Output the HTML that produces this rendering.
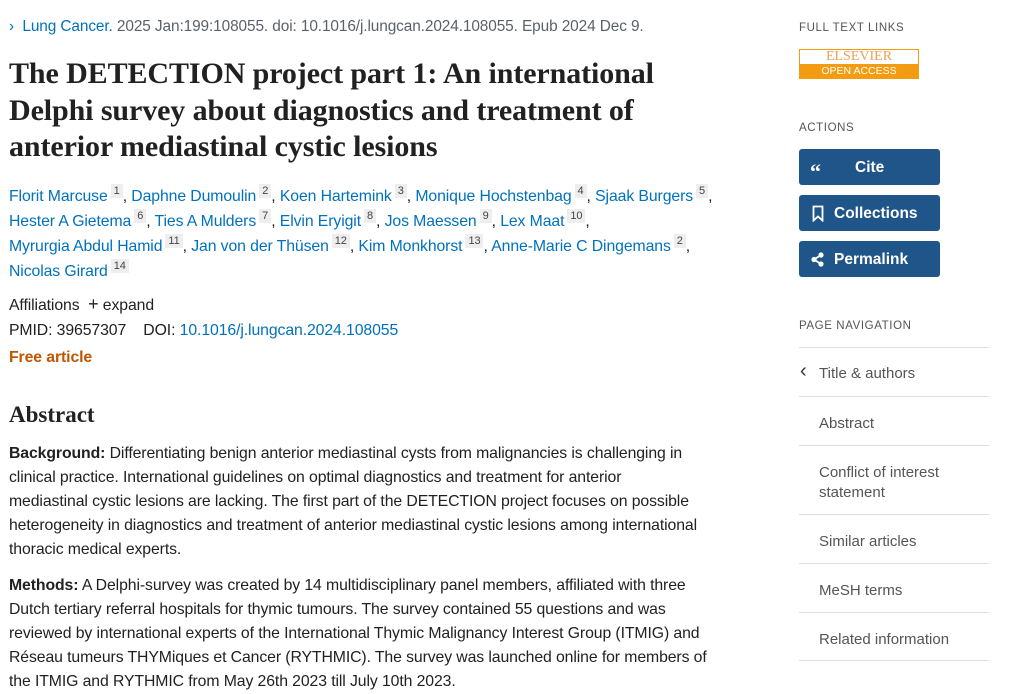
<!DOCTYPE html>
<html><head><meta charset="utf-8"><style>
*{margin:0;padding:0;box-sizing:border-box}
body{width:1027px;height:679px;overflow:hidden;background:#fff;font-family:"Liberation Sans",sans-serif;color:#212121;position:relative}
.a{position:absolute;white-space:nowrap}
a,.l{color:#0071bc;text-decoration:none}
.t{font-size:15.8px;line-height:24px;letter-spacing:-0.1px}
h1{position:absolute;left:9px;top:56px;font-family:"Liberation Serif",serif;font-weight:bold;font-size:30px;line-height:36.5px;color:#212121;white-space:nowrap;letter-spacing:-0.1px}
sup{display:inline-block;background:#eee;color:#444;font-size:11px;line-height:14px;padding:0 3px;vertical-align:7px;margin-left:3px}
.side{font-size:11.5px;letter-spacing:.6px;color:#555}
.btn{position:absolute;left:799px;width:141px;height:36px;background:#20558a;border-radius:3px;color:#fff;font-weight:bold;font-size:15.5px;line-height:38px}
.nav{position:absolute;left:799px;width:190px;border-top:1px solid #ddd;font-size:15px;color:#555;padding-left:20px;line-height:20px}
</style></head><body>
<div class="a t" style="left:9px;top:15px;color:#5b616b;font-size:15.4px"><span class="l">›&nbsp; Lung Cancer.</span> 2025 Jan:199:108055. doi: 10.1016/j.lungcan.2024.108055. Epub 2024 Dec 9.</div>
<h1>The DETECTION project part 1: An international<br>Delphi survey about diagnostics and treatment of<br>anterior mediastinal cystic lesions</h1>
<div class="a t" style="left:9px;top:184px;color:#212121">
<a>Florit Marcuse</a><sup>1</sup>, <a>Daphne Dumoulin</a><sup>2</sup>, <a>Koen Hartemink</a><sup>3</sup>, <a>Monique Hochstenbag</a><sup>4</sup>, <a>Sjaak Burgers</a><sup>5</sup>,<br>
<a>Hester A Gietema</a><sup>6</sup>, <a>Ties A Mulders</a><sup>7</sup>, <a>Elvin Eryigit</a><sup>8</sup>, <a>Jos Maessen</a><sup>9</sup>, <a>Lex Maat</a><sup>10</sup>,<br>
<a>Myrurgia Abdul Hamid</a><sup>11</sup>, <a>Jan von der Thüsen</a><sup>12</sup>, <a>Kim Monkhorst</a><sup>13</sup>, <a>Anne-Marie C Dingemans</a><sup>2</sup>,<br>
<a>Nicolas Girard</a><sup>14</sup></div>
<div class="a t" style="left:9px;top:292px">Affiliations &nbsp;<span style="font-size:18px">+</span> expand</div>
<div class="a t" style="left:9px;top:319px">PMID: 39657307 &nbsp;&nbsp; DOI: <a>10.1016/j.lungcan.2024.108055</a></div>
<div class="a t" style="left:9px;top:346px;color:#c05600;font-weight:bold">Free article</div>
<div class="a" style="left:9px;top:401px;font-family:'Liberation Serif',serif;font-weight:bold;font-size:23px;line-height:28px">Abstract</div>
<div class="a t" style="left:9px;top:442px"><b>Background:</b> Differentiating benign anterior mediastinal cysts from malignancies is challenging in<br>clinical practice. International guidelines on optimal diagnostics and treatment for anterior<br>mediastinal cystic lesions are lacking. The first part of the DETECTION project focuses on possible<br>heterogeneity in diagnostics and treatment of anterior mediastinal cystic lesions among international<br>thoracic medical experts.</div>
<div class="a t" style="left:9px;top:574px"><b>Methods:</b> A Delphi-survey was created by 14 multidisciplinary panel members, affiliated with three<br>Dutch tertiary referral hospitals for thymic tumours. The survey contained 55 questions and was<br>reviewed by international experts of the International Thymic Malignancy Interest Group (ITMIG) and<br>Réseau tumeurs THYMiques et Cancer (RYTHMIC). The survey was launched online for members of<br>the ITMIG and RYTHMIC from May 26th 2023 till July 10th 2023.</div>

<div class="a side" style="left:799px;top:22px">FULL TEXT LINKS</div>
<div class="a" style="left:799px;top:49px;width:120px;height:30px;border:1px solid #f39c12">
<div style="height:14px;text-align:center;font-family:'Liberation Serif',serif;font-size:14px;line-height:14px;color:#f0a050">ELSEVIER</div>
<div style="height:14px;background:#f39c12;color:#fff;font-size:10.5px;line-height:14px;text-align:center">OPEN ACCESS</div></div>
<div class="a side" style="left:799px;top:122px">ACTIONS</div>
<div class="btn" style="top:149px"><span style="position:absolute;left:11px;font-family:'Liberation Serif',serif;font-size:22px;top:4px">“</span><span style="position:absolute;left:56px">Cite</span></div>
<div class="btn" style="top:195px"><svg style="position:absolute;left:13px;top:10px" width="12" height="17" viewBox="0 0 12 17"><path d="M1.5 1.5h9v14l-4.5-4-4.5 4z" fill="none" stroke="#fff" stroke-width="1.8"/></svg><span style="position:absolute;left:35px">Collections</span></div>
<div class="btn" style="top:241px"><svg style="position:absolute;left:12px;top:11px" width="14" height="15" viewBox="0 0 14 15"><circle cx="10" cy="3" r="2.6" fill="#fff"/><circle cx="3" cy="7.5" r="2.6" fill="#fff"/><circle cx="10" cy="12" r="2.6" fill="#fff"/><path d="M10 3L3 7.5 10 12" stroke="#fff" stroke-width="1.8" fill="none"/></svg><span style="position:absolute;left:35px">Permalink</span></div>
<div class="a side" style="left:799px;top:320px">PAGE NAVIGATION</div>
<div class="nav" style="top:347px;height:49px;padding-top:16px"><span style="position:absolute;left:1px;top:13px;font-size:20px;color:#333">‹</span>Title &amp; authors</div>
<div class="nav" style="top:396px;height:49px;padding-top:17px">Abstract</div>
<div class="nav" style="top:445px;height:69px;padding-top:17px">Conflict of interest<br>statement</div>
<div class="nav" style="top:514px;height:49px;padding-top:17px">Similar articles</div>
<div class="nav" style="top:563px;height:49px;padding-top:17px">MeSH terms</div>
<div class="nav" style="top:612px;height:49px;padding-top:17px;border-bottom:1px solid #ddd">Related information</div>
</body></html>
